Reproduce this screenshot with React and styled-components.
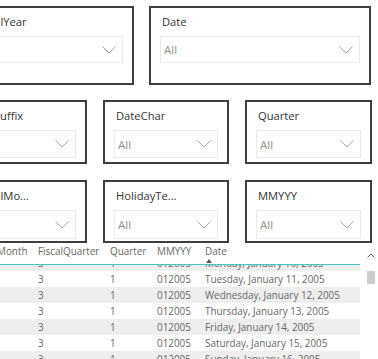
import React from 'react';
import styled, { createGlobalStyle } from 'styled-components';

const GlobalStyle = createGlobalStyle`
  html, body { margin: 0; padding: 0; background: #fff; }
  body {
    width: 378px; height: 359px; overflow: hidden;
    font-family: "Open Sans", "Noto Sans", sans-serif;
  }
`;

const Page = styled.div`
  width: 378px;
  height: 359px;
  overflow: hidden;
  display: flex;
  flex-direction: column;
`;

const SlicerRow = styled.div`
  display: flex;
  flex-shrink: 0;
  gap: ${p => p.$gap}px;
  margin-left: ${p => p.$offset}px;
  margin-top: ${p => p.$top}px;
`;

const Slicer = styled.div`
  box-sizing: border-box;
  flex-shrink: 0;
  width: ${p => p.$w}px;
  height: ${p => p.$h}px;
  border: 2px solid #3f3f3f;
  background: #fff;
  padding: 6px 9px 0;
  display: flex;
  flex-direction: column;
  gap: 6px;
`;

const SlicerTitle = styled.div`
  font-size: 11.2px;
  line-height: 16px;
  color: #333;
  padding-left: 2px;
  white-space: nowrap;
`;

const Dropdown = styled.div`
  box-sizing: border-box;
  height: ${p => p.$h}px;
  border: 1px solid #e9e9e9;
  display: flex;
  align-items: center;
  justify-content: space-between;
  padding: 0 6px 0 3px;
  font-size: 11.5px;
  color: #8f8f8f;
`;

const Chevron = () => (
  <svg width="14" height="8" viewBox="0 0 14 8">
    <polyline points="0.5,0.5 7,7 13.5,0.5" fill="none" stroke="#a6a6a6" strokeWidth="1" />
  </svg>
);

const SlicerBox = ({ title, w, h, dd }) => (
  <Slicer $w={w} $h={h}>
    <SlicerTitle>{title}</SlicerTitle>
    <Dropdown $h={dd}>
      <span>All</span>
      <Chevron />
    </Dropdown>
  </Slicer>
);

const Table = styled.div`
  flex: 1;
  min-height: 0;
  display: flex;
  font-size: 9.9px;
  color: #666;
`;

const GridWrap = styled.div`
  width: 360px;
  overflow: hidden;
  display: flex;
  flex-direction: column;
`;

const cols = '66px 72px 47px 48px 160px';

const HeaderRow = styled.div`
  display: grid;
  grid-template-columns: ${cols};
  margin-left: -33px;
  height: 22px;
  box-sizing: border-box;
  border-bottom: 1px solid #3fc9c1;
  flex-shrink: 0;
`;

const HeadCell = styled.div`
  padding: 2px 0 0 5px;
  line-height: 13px;
  white-space: nowrap;
  display: flex;
  flex-direction: column;
  align-items: flex-start;
`;

const SortMark = styled.svg`
  margin: 1px 0 0 1px;
`;

const Body = styled.div`
  flex: 1;
  min-height: 0;
  overflow: hidden;
`;

const Rows = styled.div`
  margin-top: -10px;
  margin-left: -33px;
`;

const Row = styled.div`
  display: grid;
  grid-template-columns: ${cols};
  height: 16px;
  background: ${p => (p.$shade ? '#eeeeee' : '#fff')};
`;

const Cell = styled.div`
  padding-left: 5px;
  line-height: 16px;
  white-space: nowrap;
`;

const ScrollBar = styled.div`
  flex: 1;
  display: flex;
  flex-direction: column;
  align-items: center;
  padding: 10px 0 0 4px;
`;

const Thumb = styled.div`
  width: 8px;
  height: 13px;
  background: #cdcdcd;
  margin-top: 13px;
`;

const rows = [
  'Monday, January 10, 2005',
  'Tuesday, January 11, 2005',
  'Wednesday, January 12, 2005',
  'Thursday, January 13, 2005',
  'Friday, January 14, 2005',
  'Saturday, January 15, 2005',
  'Sunday, January 16, 2005',
];

export default function App() {
  return (
    <>
      <GlobalStyle />
      <Page>
        <SlicerRow $top={6} $offset={-38} $gap={15}>
          <SlicerBox title="FiscalYear" w={172} h={79} dd={27} />
          <SlicerBox title="Date" w={222} h={79} dd={27} />
        </SlicerRow>
        <SlicerRow $top={15} $offset={-39} $gap={16}>
          <SlicerBox title="DaySuffix" w={126} h={64} dd={28} />
          <SlicerBox title="DateChar" w={126} h={64} dd={28} />
          <SlicerBox title="Quarter" w={127} h={64} dd={28} />
        </SlicerRow>
        <SlicerRow $top={16} $offset={-38} $gap={16}>
          <SlicerBox title="FiscalMo..." w={125} h={63} dd={29} />
          <SlicerBox title="HolidayTe..." w={126} h={63} dd={29} />
          <SlicerBox title="MMYYY" w={127} h={63} dd={29} />
        </SlicerRow>
        <Table>
          <GridWrap>
            <HeaderRow>
              <HeadCell>FiscalMonth</HeadCell>
              <HeadCell>FiscalQuarter</HeadCell>
              <HeadCell>Quarter</HeadCell>
              <HeadCell>MMYYY</HeadCell>
              <HeadCell>
                <span>Date</span>
                <SortMark width="6" height="4" viewBox="0 0 6 4">
                  <polygon points="0,4 3,0 6,4" fill="#555" />
                </SortMark>
              </HeadCell>
            </HeaderRow>
            <Body>
              <Rows>
                {rows.map((d, i) => (
                  <Row key={d} $shade={i % 2 === 0}>
                    <Cell>7</Cell>
                    <Cell>3</Cell>
                    <Cell>1</Cell>
                    <Cell>012005</Cell>
                    <Cell>{d}</Cell>
                  </Row>
                ))}
              </Rows>
            </Body>
          </GridWrap>
          <ScrollBar>
            <svg width="8" height="5" viewBox="0 0 8 5">
              <polyline points="0.5,4.5 4,1 7.5,4.5" fill="none" stroke="#666" strokeWidth="1" />
            </svg>
            <Thumb />
          </ScrollBar>
        </Table>
      </Page>
    </>
  );
}
